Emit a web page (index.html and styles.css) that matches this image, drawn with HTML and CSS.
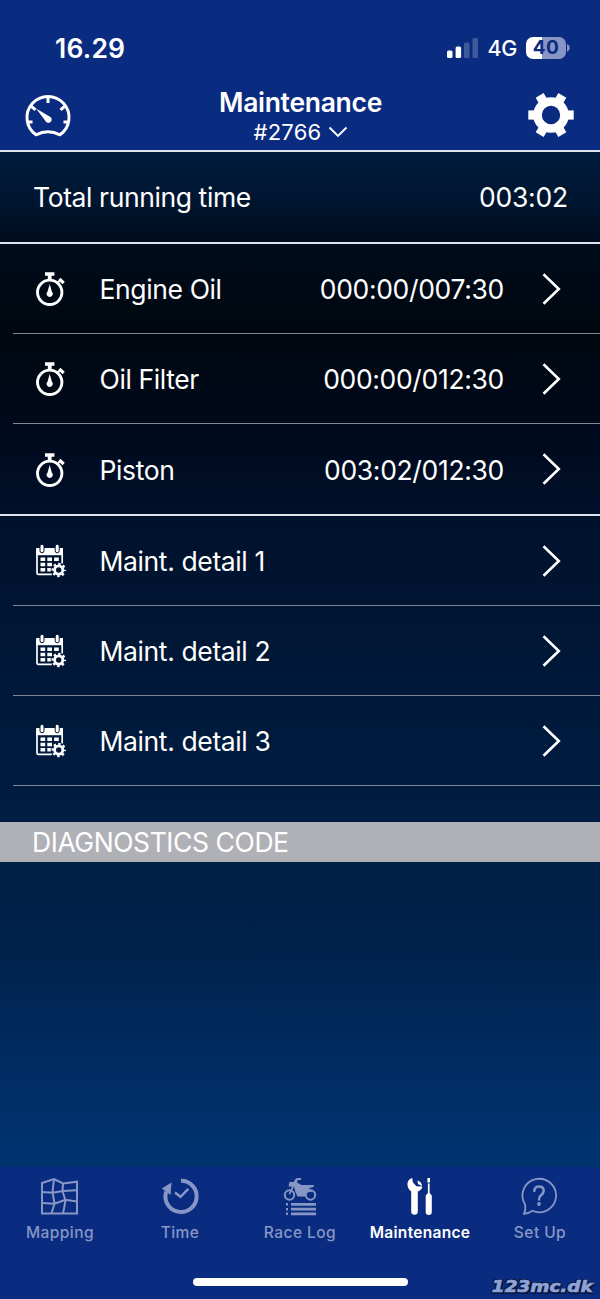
FILE: index.html
```html
<!DOCTYPE html>
<html lang="en">
<head>
<meta charset="utf-8">
<title>Maintenance</title>
<link rel="stylesheet" href="styles.css">
</head>
<body>
<svg class="defs" aria-hidden="true">
  <symbol id="stopwatch" viewBox="0 0 32 36">
    <circle cx="14.700" cy="21.300" r="12.200" fill="none" stroke="#fff" stroke-width="2.900"/>
    <path d="M10 1.200h9.400v3.600h-2.800V9h-3.800V4.800H10z" fill="#fff"/>
    <path d="M24.300 8l4.400 4" stroke="#fff" stroke-width="3.200"/>
    <path d="M22.900 11.500l1.800-2" stroke="#fff" stroke-width="2"/>
    <path d="M14.700 13l2.200 7.700a3 3 0 1 1-4.400 0z" fill="#fff"/>
  </symbol>
  <symbol id="calendar" viewBox="0 0 32 36">
    <path d="M27.200 11v9.500M16.800 31.300H3.200a1.200 1.200 0 0 1-1.200-1.200V6" fill="none" stroke="#fff" stroke-width="1.700"/>
    <path d="M1.200 5h26.800v7.200H1.200z" fill="#fff"/>
    <rect x="5" y="1.200" width="4" height="8.600" rx="2" fill="#fff" stroke="#00112a"/>
    <rect x="20.200" y="1.200" width="4" height="8.600" rx="2" fill="#fff" stroke="#00112a"/>
    <path d="M5.500 14.500h4.700v3.500H5.500zM12.300 14.500H17V18h-4.700zM19.100 14.500h4.700V18h-4.700zM5.500 19.800h4.700v3.500H5.500zM12.300 19.800H17v3.500h-4.700zM5.500 25.100h4.700v3.500H5.500zM12.300 25.100h3.500v3.500h-3.500z" fill="#fff"/>
    <circle cx="23.700" cy="27" r="4.100" fill="none" stroke="#fff" stroke-width="2.800"/>
    <circle cx="23.700" cy="27" r="6.100" fill="none" stroke="#fff" stroke-width="2.200" stroke-dasharray="2.400 2.391" stroke-dashoffset="1.200"/>
  </symbol>
  <symbol id="chevron" viewBox="0 0 20 32">
    <path d="M2.500 1.300l15.300 14.700L2.500 30.700" fill="none" stroke="#fff" stroke-width="2.600"/>
  </symbol>
</svg>

<div class="screen">
  <header class="header">
    <div class="status">
      <span class="clock">16.29</span>
      <div class="signal">
        <svg width="32" height="20" viewBox="0 0 32 20" fill="#fff">
          <rect x="0" y="12.500" width="5.500" height="7.500" rx="1.500"/>
          <rect x="8.600" y="8.500" width="5.500" height="11.500" rx="1.500"/>
          <rect x="17" y="4.500" width="5.500" height="15.500" rx="1.500" opacity=".22"/>
          <rect x="25.500" y="0" width="5.500" height="20" rx="1.500" opacity=".22"/>
        </svg>
        <span class="network">4G</span>
        <span class="battery"><span class="level">40</span></span>
        <svg class="battery-tip" width="3" height="8" viewBox="0 0 3 8"><path d="M0 0q2.800 1.200 2.800 4T0 8z" fill="#8796c5"/></svg>
      </div>
    </div>
    <div class="nav">
      <svg class="gauge" width="48" height="44" viewBox="0 -2 48 44" fill="none" stroke="#fff" stroke-width="3">
        <path d="M12 38.800A21 21 0 1 1 36 38.800Q24 32.500 12 38.800z" stroke-linejoin="round"/>
        <path d="M24 1v6M3.500 26h5M39.500 26h5M7.500 10.500l4 3.300M40.500 10.500l-4 3.300"/>
        <path d="M12 12.500l14 8.200a3.300 3.300 0 1 1-4.700 4z" fill="#fff" stroke="none"/>
      </svg>
      <div class="titles">
        <h1 class="title">Maintenance</h1>
        <div class="device"><span class="device-id">#2766</span>
          <svg width="20" height="12" viewBox="0 0 20 12"><path d="M1.500 1.500L10 10l8.500-8.500" fill="none" stroke="#fff" stroke-width="1.900"/></svg>
        </div>
      </div>
      <svg class="gear" width="46" height="46" viewBox="-23 -23 46 46">
        <circle r="13.500" fill="none" stroke="#fff" stroke-width="8.600"/>
        <g fill="#fff">
          <path d="M14-4.600h8.700v9.200H14z"/>
          <path d="M14-4.600h8.700v9.200H14z" transform="rotate(60)"/>
          <path d="M14-4.600h8.700v9.200H14z" transform="rotate(120)"/>
          <path d="M14-4.600h8.700v9.200H14z" transform="rotate(180)"/>
          <path d="M14-4.600h8.700v9.200H14z" transform="rotate(240)"/>
          <path d="M14-4.600h8.700v9.200H14z" transform="rotate(300)"/>
        </g>
      </svg>
    </div>
  </header>

  <main class="content">
    <section class="total"><span class="total-label">Total running time</span><span class="total-value">003:02</span></section>
    <section class="group">
      <div class="row"><svg class="icon"><use href="#stopwatch"/></svg><span class="name">Engine Oil</span><span class="value">000:00/007:30</span><svg class="arrow"><use href="#chevron"/></svg></div>
      <div class="row"><svg class="icon"><use href="#stopwatch"/></svg><span class="name">Oil Filter</span><span class="value">000:00/012:30</span><svg class="arrow"><use href="#chevron"/></svg></div>
      <div class="row"><svg class="icon"><use href="#stopwatch"/></svg><span class="name">Piston</span><span class="value">003:02/012:30</span><svg class="arrow"><use href="#chevron"/></svg></div>
    </section>
    <section class="group details">
      <div class="row"><svg class="icon"><use href="#calendar"/></svg><span class="name">Maint. detail 1</span><svg class="arrow"><use href="#chevron"/></svg></div>
      <div class="row"><svg class="icon"><use href="#calendar"/></svg><span class="name">Maint. detail 2</span><svg class="arrow"><use href="#chevron"/></svg></div>
      <div class="row"><svg class="icon"><use href="#calendar"/></svg><span class="name">Maint. detail 3</span><svg class="arrow"><use href="#chevron"/></svg></div>
    </section>
    <h2 class="diagnostics"><span>DIAGNOSTICS CODE</span></h2>
  </main>

  <footer class="footer">
    <nav class="tabs">
      <div class="tab">
        <svg width="40" height="40" viewBox="0 0 40 40" fill="none" stroke="currentColor" stroke-width="2">
          <path d="M2 7L14 3l9 4.500 14-1.800V37.500H2z"/>
          <path d="M14 3L12.500 16l2 11.500-3 10M23 7.500l-.5 7.500L25.500 24.500 23 37.500M2 16l10.500.7L23 15l14-.8M2 27l12.500.8 11-4L37 25.500"/>
        </svg>
        <span>Mapping</span>
      </div>
      <div class="tab">
        <svg width="40" height="40" viewBox="0 0 40 40">
          <path d="M21 4.800a15.600 15.600 0 1 1-14.800 10.800" fill="none" stroke="currentColor" stroke-width="4"/>
          <path d="M1.800 12.500L11.500 6.500l-1 12.500z" fill="currentColor"/>
          <path d="M15 16.500l5.500 4.300 7.800-8" fill="none" stroke="currentColor" stroke-width="2.400"/>
        </svg>
        <span>Time</span>
      </div>
      <div class="tab">
        <svg width="40" height="40" viewBox="0 0 40 40" fill="currentColor">
          <circle cx="9.500" cy="19" r="4.700" fill="none" stroke="currentColor" stroke-width="2"/>
          <circle cx="30.500" cy="19" r="4.700" fill="none" stroke="currentColor" stroke-width="2"/>
          <path d="M9.500 6h4.300L15 3.500 17 2h4v2h-3.200l-.8 2.500 4.500 2.500h12.500l-.5 2-5 1.200 4 2.300-1 1.500c-4-.6-5.500 1-6.500 4.500h-7.500l-2.500-5.500-1-4.500-3.800 8-1.500-.7 3.300-7.300H8.500z"/>
          <path d="M6 27h2v2.600H6zM6 32h2v2.600H6zM6 36.500h2v2.600H6zM11 27h25v2.800H11zM11 31.800h25v2.800H11zM11 36.500h25v2.800H11z"/>
        </svg>
        <span>Race Log</span>
      </div>
      <div class="tab active">
        <svg width="40" height="40" viewBox="0 0 40 40" fill="currentColor">
          <path d="M12.300 2C8.800 3 7.300 6 7.500 9c.2 3 1.700 5 3.700 6.200V35.500a3.300 3.300 0 0 0 6.600 0V15.500q4-1.500 4.500-5l-6-.2-3.500-4z"/>
          <path d="M17.500 4.500Q22 6 22 10l-4-2z"/>
          <path d="M27.400 2h2.600v4.500h-2.600zM27.900 7.500h1.700v9.500l2.200 2.500V36a3 3 0 0 1-6.100 0V19.500l2.200-2.500z"/>
        </svg>
        <span>Maintenance</span>
      </div>
      <div class="tab">
        <svg width="40" height="40" viewBox="0 0 40 40" fill="none" stroke="currentColor">
          <path d="M4.800 28A16.800 16.700 0 1 1 12.500 34.800Q9 37.500 3.800 37.800 6.200 34 4.800 28z" stroke-width="1.800" stroke-linejoin="round"/>
          <path d="M14.300 15q.2-4.600 4.700-4.600t4.700 4.300q0 2.400-2.700 4.500-2 1.500-2 4.200" stroke-width="2.500" stroke-linecap="round"/>
          <circle cx="19" cy="28" r="1.900" fill="currentColor" stroke="none"/>
        </svg>
        <span>Set Up</span>
      </div>
    </nav>
    <div class="home-bar"></div>
    <div class="watermark">123mc.dk</div>
  </footer>
</div>
</body>
</html>
```

FILE: styles.css
```css
* { box-sizing: border-box; }
body { margin: 0; font-family: Inter, "Liberation Sans", sans-serif; color: #fff; }
.defs { display: none; }
svg { display: block; flex: none; }
span { white-space: nowrap; }

.screen { width: 600px; height: 1299px; display: flex; flex-direction: column; overflow: hidden; background: #0a2c80; }

.header { height: 152px; border-bottom: 2px solid #dfe4ef; flex: none; }
.status { height: 88px; padding: 33px 30px 0 55px; display: flex; justify-content: space-between; align-items: flex-start; }
.clock { font-size: 26.500px; line-height: 30px; font-weight: 600; letter-spacing: .2px; }
.signal { display: flex; align-items: center; height: 30px; }
.network { font-size: 21.500px; line-height: 28px; margin-left: 8px; font-weight: 500; letter-spacing: -.3px; }
.battery { width: 40px; height: 22px; margin-left: 9px; border-radius: 7px; background: linear-gradient(90deg, #fff 40%, #8796c5 40%); display: flex; justify-content: center; align-items: center; }
.level { color: #0a2c80; font-size: 19px; line-height: 20px; font-weight: 700; letter-spacing: .5px; }
.battery-tip { margin-left: 1px; }

.nav { display: flex; justify-content: space-between; padding: 0 26px 0 24px; }
.gauge { margin-top: 6px; }
.gear { margin-top: 4px; }
.titles { display: flex; flex-direction: column; align-items: center; padding-left: 1px; }
.title { margin: 0; font-size: 26.500px; line-height: 29px; font-weight: 600; letter-spacing: -.3px; }
.device { display: flex; align-items: center; gap: 6px; font-size: 22px; line-height: 30px; letter-spacing: .25px; }

.content {
  flex: 1;
  background: linear-gradient(180deg, #001c3d 0, #001530 50px, #000c1c 91px, #00070f 180px, #000a1e 290px, #00112b 370px, #00193a 540px, #001e43 680px, #00214b 790px, #002858 860px, #003370 1000px, #003470 1015px);
}
.total { height: 92px; padding: 0 32px 0 33px; display: flex; justify-content: space-between; align-items: center; border-bottom: 2px solid #dfe4ef; font-size: 26.500px; letter-spacing: -.4px; }
.total-value { letter-spacing: -.2px; }
.group { padding-left: 13px; border-bottom: 2px solid #dfe4ef; }
.group.details { border-bottom: 0; }
.row { height: 90px; padding: 1px 39px 0 22px; display: flex; align-items: center; border-bottom: 1px solid #7f8996; font-size: 26.500px; letter-spacing: -.38px; }
.group:not(.details) .row:last-child { border-bottom: 0; }
.icon { width: 32px; height: 36px; }
.name { margin-left: 32.500px; }
.value { margin-left: auto; letter-spacing: -.33px; }
.arrow { width: 20px; height: 32px; margin-left: auto; margin-top: -1px; }
.value + .arrow { margin-left: 37px; }
.diagnostics { margin: 36px 0 0; height: 40px; padding-left: 32px; background: #b0b0b7; font-size: 26.500px; line-height: 41px; font-weight: 400; letter-spacing: -.42px; }

.footer { height: 132px; flex: none; position: relative; background: #0a2c80; }
.tabs { display: flex; padding-top: 9px; }
.tab { width: 120px; display: flex; flex-direction: column; align-items: center; color: #8796c5; font-size: 15.500px; line-height: 20px; font-weight: 500; letter-spacing: .45px; }
.tab svg { margin-bottom: 7px; }
.tab.active { color: #fff; font-weight: 600; letter-spacing: .3px; }
.home-bar { width: 215px; height: 8px; border-radius: 4px; background: #fff; margin: 35px auto 0; }
.watermark {
  position: absolute; right: 7px; bottom: 2px;
  font: italic bold 16px/20px "DejaVu Sans", sans-serif;
  color: #8fa3d6; -webkit-text-stroke: .7px #8fa3d6;
  transform: scaleX(1.15); transform-origin: right;
  text-shadow: 1.500px 0 #061640, -1.500px 0 #061640, 0 1.500px #061640, 0 -1.500px #061640, 1.500px 1.500px #061640, -1px -1px #061640, 1px -1px #061640, -1px 1px #061640;
}
```
